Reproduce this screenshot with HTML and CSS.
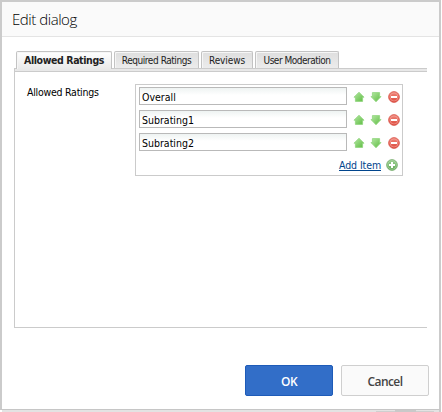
FILE: index.html
```html
<!DOCTYPE html>
<html lang="en">
<head>
<meta charset="utf-8">
<title>Edit dialog</title>
<link rel="stylesheet" href="styles.css">
</head>
<body>
<svg width="0" height="0" class="defs" aria-hidden="true">
  <defs>
    <linearGradient id="green" x1="0" y1="0" x2="1" y2="1"><stop offset="0" stop-color="#b6e8a5"/><stop offset="1" stop-color="#5cbb40"/></linearGradient>
    <linearGradient id="red" x1="0" y1="0" x2="0" y2="1"><stop offset="0" stop-color="#f08a7e"/><stop offset="1" stop-color="#dc4639"/></linearGradient>
    <linearGradient id="add" x1="0" y1="0" x2="0" y2="1"><stop offset="0" stop-color="#9bcf91"/><stop offset="1" stop-color="#5fa653"/></linearGradient>
    <symbol id="up" viewBox="0 0 12 12"><path d="M6 1.2 11 6.2H9.6V10.4H2.4V6.2H1Z" fill="url(#green)" stroke="#8fd47c" stroke-width=".8" stroke-linejoin="round"/></symbol>
    <symbol id="down" viewBox="0 0 12 12"><path d="M2.4 1.6H9.6V5.6H11L6 10.8 1 5.6H2.4Z" fill="url(#green)" stroke="#8fd47c" stroke-width=".8" stroke-linejoin="round"/></symbol>
    <symbol id="remove" viewBox="0 0 12 12"><circle cx="6" cy="6" r="5.4" fill="url(#red)" stroke="#d9574c" stroke-width=".8"/><circle cx="6" cy="6" r="4" fill="none" stroke="#f4a59d" stroke-width=".6"/><path d="M3 5H9V7H3Z" fill="#fff"/></symbol>
    <symbol id="plus" viewBox="0 0 12 12"><circle cx="6" cy="6" r="5.4" fill="url(#add)" stroke="#78ac6e" stroke-width=".8"/><circle cx="6" cy="6" r="4.3" fill="none" stroke="#b4dcab" stroke-width=".6"/><path d="M5 3H7V5H9V7H7V9H5V7H3V5H5Z" fill="#fff"/></symbol>
  </defs>
</svg>
<main class="dialog">
  <header class="header"><h1 class="title">Edit dialog</h1></header>
  <section class="content">
    <nav class="tabs">
      <span class="tab tab-active"><span>Allowed Ratings</span></span>
      <span class="tab tab-required"><span>Required Ratings</span></span>
      <span class="tab tab-reviews"><span>Reviews</span></span>
      <span class="tab tab-users"><span>User Moderation</span></span>
    </nav>
    <div class="panel">
      <label class="label">Allowed Ratings</label>
      <div class="list">
        <div class="row"><span class="field">Overall</span><svg class="icon"><use href="#up"/></svg><svg class="icon"><use href="#down"/></svg><svg class="icon icon-remove"><use href="#remove"/></svg></div>
        <div class="row"><span class="field">Subrating1</span><svg class="icon"><use href="#up"/></svg><svg class="icon"><use href="#down"/></svg><svg class="icon icon-remove"><use href="#remove"/></svg></div>
        <div class="row"><span class="field">Subrating2</span><svg class="icon"><use href="#up"/></svg><svg class="icon"><use href="#down"/></svg><svg class="icon icon-remove"><use href="#remove"/></svg></div>
        <div class="add"><a class="link">Add Item</a><svg class="icon"><use href="#plus"/></svg></div>
      </div>
    </div>
  </section>
  <footer class="footer"><span class="button primary">OK</span><span class="button">Cancel</span></footer>
</main>
<div class="under"><span class="shadow-thin"></span><span class="shadow-thick"></span><span class="shadow-end"></span></div>
</body>
</html>
```
FILE: styles.css
```css
* { box-sizing: border-box; }
body { margin: 0; width: 442px; height: 412px; overflow: hidden; background: #fff; font-family: "DejaVu Sans Condensed", "DejaVu Sans", sans-serif; font-size: 10.5px; color: #000; }
.defs { position: absolute; }
.dialog { display: flex; flex-direction: column; width: 441px; height: 410px; border: 2px solid #cbcbcb; border-bottom: 1px solid #c6c6c6; background: #fff; }
.header { height: 35px; padding-left: 10px; background: #fafafa; border-bottom: 1px solid #e4e4e4; }
.title { margin: 0; font: 300 15px/35px "Open Sans", sans-serif; letter-spacing: -0.45px; color: #000; }
.content { width: 413px; height: 291px; margin: 14px 0 0 12px; }
.tabs { display: flex; gap: 2px; height: 17px; padding-left: 2px; }
.tab { display: flex; align-items: center; justify-content: center; height: 17px; border: 1px solid #c3c3c3; border-bottom: 0; border-radius: 2px 2px 0 0; box-shadow: inset 1px 1px #f6f6f6; background: linear-gradient(#dedede, #ececec); color: #222; font-size: 10px; letter-spacing: -.45px; white-space: nowrap; }
.tab-active { width: 96px; height: 18px; padding-bottom: 1px; background: linear-gradient(#fff, #e9e9e9); font-size: 10.5px; font-weight: bold; letter-spacing: -.4px; z-index: 1; }
.tab-required { width: 85px; }
.tab-reviews { width: 52px; letter-spacing: -.1px; }
.tab-users { width: 84px; letter-spacing: -.5px; }
.panel { display: flex; height: 260px; border-left: 1px solid #cbcbcb; border-bottom: 1px solid #cbcbcb; background: linear-gradient(#cbcbcb 1px, #e8e8e8 1px 3px, #cbcbcb 3px 4px, #fff 4px); }
.label { width: 120px; padding: 17px 0 0 12px; line-height: 14px; letter-spacing: -.25px; white-space: nowrap; }
.list { width: 268px; height: 92px; margin-top: 16px; padding: 2px 3px; border: 1px solid #cbcbcb; }
.row { display: flex; align-items: center; gap: 5px; height: 23px; padding-bottom: 5px; }
.field { flex: none; width: 208px; height: 18px; padding-left: 2px; margin-right: 1px; border: 1px solid #b9b9b9; line-height: 19px; background: linear-gradient(#eef3f2, #fff 7px); }
.icon { width: 12px; height: 12px; flex: none; }
.row .icon { margin-top: 1px; }
.row .icon-remove { margin-left: .5px; }
.add { display: flex; align-items: center; justify-content: flex-end; height: 18px; padding-bottom: 1px; }
.link { margin-right: 5px; color: #00448c; letter-spacing: -.1px; text-decoration: underline; }
.add .icon { margin-right: 1px; }
.footer { display: flex; justify-content: flex-end; gap: 8px; margin-top: 23px; padding-right: 10px; }
.button { width: 88px; height: 31px; border: 1px solid #cfcfcf; border-radius: 2px; background: #fafafa; color: #444; font: 600 12px/32px "Open Sans", sans-serif; letter-spacing: -.6px; text-align: center; }
.primary { border-color: #1e5bb8; background: #326ec8; color: #fff; }
.under { display: flex; align-items: flex-end; width: 439px; height: 2px; padding-left: 374px; margin-left: 2px; border-right: 2px solid #cbcbcb; background: #e3e3e3; }
.shadow-thin { width: 19px; height: 1px; background: #cfcfcf; }
.shadow-thick { width: 21px; height: 2px; background: #c9c9c9; }
.shadow-end { width: 18px; height: 1px; background: #cfcfcf; }
```
